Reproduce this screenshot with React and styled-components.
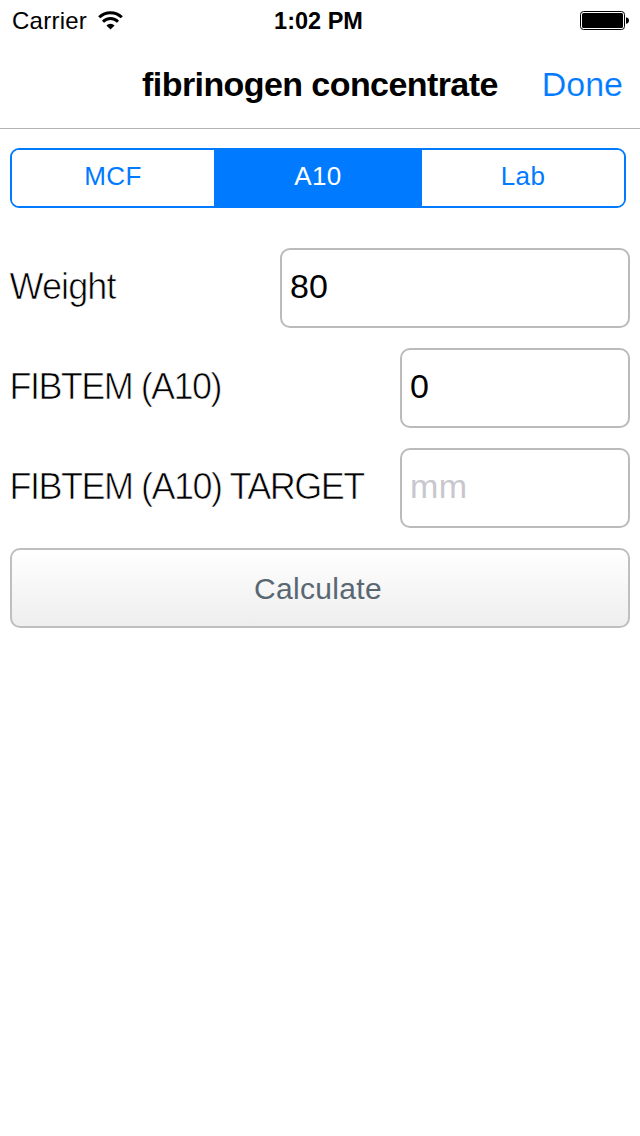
import React, { useState } from 'react'
import styled, { createGlobalStyle } from 'styled-components'

const Global = createGlobalStyle`
  * {
    box-sizing: border-box;
  }

  body {
    margin: 0;
    background: #fff;
    color: #000;
    font-family: "Liberation Sans", Arial, sans-serif;
  }
`;

const Screen = styled.div`
  width: 640px;
  min-height: 1136px;
  background: #fff;
`;

const StatusBar = styled.div`
  display: grid;
  grid-template-columns: 1fr auto 1fr;
  grid-template-rows: 40px;
  align-items: center;
  height: 40px;
  padding: 0 10px 0 12px;
  font-size: 24px;
  line-height: 38px;
`;

const Carrier = styled.div`
  display: flex;
  align-items: center;
  gap: 11px;
  padding-top: 2px;
  letter-spacing: 0.25px;

  & svg {
    display: block;
    margin-bottom: 2px;
  }
`;

const Clock = styled.div`
  padding: 2px 5px 0 0;
  font-weight: bold;
  font-size: 23.5px;
  letter-spacing: 0;
`;

const Battery = styled.svg`
  justify-self: end;
  display: block;
`;

const NavBar = styled.div`
  display: flex;
  justify-content: flex-end;
  align-items: center;
  height: 89px;
  padding-right: 17px;
  border-bottom: 1px solid #b2b2b2;
  line-height: 88px;
`;

const Title = styled.h1`
  margin: 0 44px 0 0;
  font-size: 34px;
  font-weight: bold;
  letter-spacing: -0.58px;
  white-space: nowrap;
`;

const DoneBtn = styled.button`
  padding: 0;
  border: 0;
  background: none;
  color: #007aff;
  font: 34px/88px "Liberation Sans", Arial, sans-serif;
  -webkit-text-stroke: 0.2px #fff;
  cursor: pointer;
`;

const Segments = styled.div`
  display: grid;
  grid-template-columns: 202px 208px 202px;
  width: 616px;
  height: 60px;
  margin: 19px 0 40px 10px;
  border: 2px solid #007aff;
  border-radius: 9px;
  overflow: hidden;
`;

const Segment = styled.button`
  padding: 0 0 4px;
  border: 0;
  background: ${({ $active }) => ($active ? '#007aff' : '#fff')};
  color: ${({ $active }) => ($active ? '#fff' : '#007aff')};
  font: 26px/52px "Liberation Sans", Arial, sans-serif;
  letter-spacing: 0.4px;
  cursor: pointer;
`;

const Form = styled.form`
  display: flex;
  flex-direction: column;
  gap: 20px;
  padding: 0 10px;
`;

const Row = styled.label`
  display: flex;
  justify-content: space-between;
  align-items: center;
  height: 80px;
`;

// the stroke in the background colour makes the letters light
const Label = styled.span`
  margin-left: -0.5px;
  padding-bottom: 2px;
  font-size: 36px;
  letter-spacing: ${({ $spacing }) => $spacing || 0}px;
  white-space: nowrap;
  -webkit-text-stroke: 0.7px #fff;
`;

const Input = styled.input`
  width: ${({ $width }) => $width}px;
  height: 80px;
  padding: 0 8px 3px;
  border: 2px solid #bbb;
  border-radius: 10px;
  outline: 0;
  background: #fff;
  color: #000;
  font: 34px "Liberation Sans", Arial, sans-serif;

  &::placeholder {
    color: #c7c7cd;
    opacity: 1;
    letter-spacing: 0.5px;
  }
`;

const CalculateBtn = styled.button`
  height: 80px;
  padding: 1px 4px 0 0;
  border: 2px solid #bfbfbf;
  border-radius: 10px;
  background: linear-gradient(#fff, #eee);
  color: #596773;
  font: 30px "Liberation Sans", Arial, sans-serif;
  letter-spacing: 0.3px;
  cursor: pointer;
`;

const tabs = ['MCF', 'A10', 'Lab'];

const App = () => {
  const [tab, setTab] = useState('A10');
  const [weight, setWeight] = useState('80');
  const [fibtem, setFibtem] = useState('0');
  const [target, setTarget] = useState('');

  return (
    <Screen>
      <Global />
      <StatusBar>
        <Carrier>
          <span>Carrier</span>
          <svg width="25" height="19" viewBox="0 0 25 19">
            <g fill="none" stroke="#000" strokeWidth="3">
              <path d="M1.2 6.3a16 16 0 0 1 22.6 0" />
              <path d="M5 10.7a10.6 10.6 0 0 1 15 0" />
            </g>
            <path d="M12.5 18.500 8.400 14.400a5.900 5.900 0 0 1 8.200 0Z" />
          </svg>
        </Carrier>
        <Clock>1:02 PM</Clock>
        <Battery width="50" height="19" viewBox="0 0 50 19">
          <rect x="0.5" y="0.5" width="44" height="18" rx="3" fill="none" stroke="#000" strokeWidth="1" />
          <rect x="2" y="2" width="41" height="15" rx="1.5" />
          <path d="M46 6.2c1.8.3 3 1.5 3 3.3s-1.2 3-3 3.3Z" />
        </Battery>
      </StatusBar>
      <NavBar>
        <Title>fibrinogen concentrate</Title>
        <DoneBtn>Done</DoneBtn>
      </NavBar>
      <Segments>
        {tabs.map((v) => (
          <Segment key={v} $active={v === tab} onClick={() => setTab(v)}>{v}</Segment>
        ))}
      </Segments>
      <Form onSubmit={(e) => e.preventDefault()}>
        <Row>
          <Label $spacing={-0.9}>Weight</Label>
          <Input $width={350} value={weight} onChange={(e) => setWeight(e.target.value)} />
        </Row>
        <Row>
          <Label $spacing={-1.55}>FIBTEM (A10)</Label>
          <Input $width={230} value={fibtem} onChange={(e) => setFibtem(e.target.value)} />
        </Row>
        <Row>
          <Label $spacing={-1.5}>FIBTEM (A10) TARGET</Label>
          <Input $width={230} placeholder="mm" value={target} onChange={(e) => setTarget(e.target.value)} />
        </Row>
        <CalculateBtn>Calculate</CalculateBtn>
      </Form>
    </Screen>
  );
}

export default App
